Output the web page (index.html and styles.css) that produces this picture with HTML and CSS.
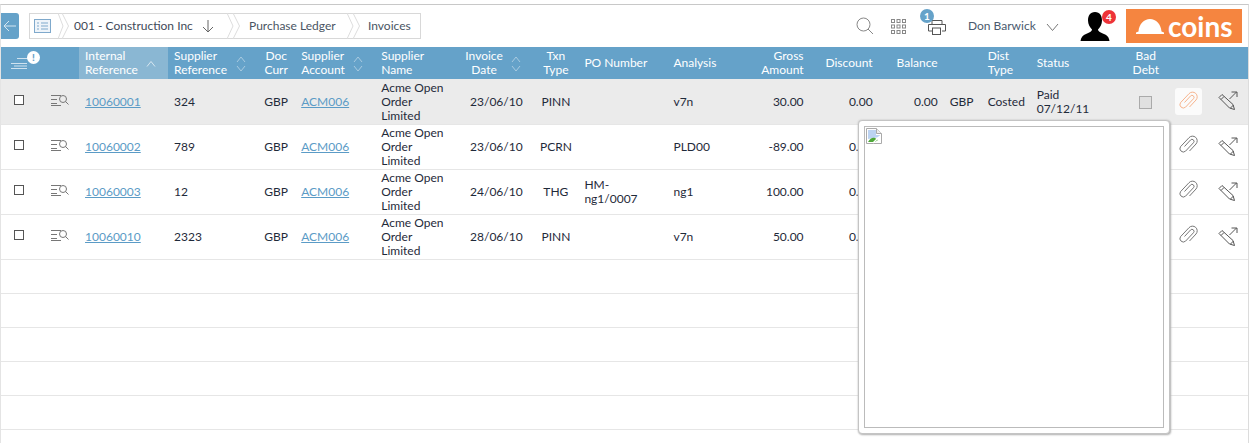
FILE: index.html
```html
<!DOCTYPE html>
<html lang="en">
<head>
<meta charset="utf-8">
<title>Invoices</title>
<link rel="stylesheet" href="styles.css">
</head>
<body>
<svg class="defs" width="0" height="0" aria-hidden="true">
  <symbol id="row-search" viewBox="0 0 18 12"><path d="M0 1.500h10M0 5.500h6M0 9.500h6M0 11.500h10" fill="none" stroke="#777" stroke-width="1"/><circle cx="12" cy="5" r="3.500" fill="none" stroke="#777"/><path d="M14.500 7.500l3 3" stroke="#777" fill="none"/></symbol>
  <symbol id="diamond" viewBox="0 0 10 16"><path d="M1 6l4-5 4 5M1 10l4 5 4-5" fill="none" stroke="#a9cbe1" stroke-width="1"/></symbol>
  <symbol id="clip" viewBox="0 0 20 20"><path d="M6.500 11.500l6-6.500a2 2 0 0 1 3 2.700l-8 8.500a3.400 3.400 0 0 1-5-4.500l8.500-9a4.700 4.700 0 0 1 7 6.300l-6.500 7" fill="none" stroke="currentColor" stroke-width="1"/></symbol>
  <symbol id="pencil" viewBox="0 0 20 20"><path d="M1 6.500l3-3 11 10 1.500 5-5-1.500zM3 8.500l3-3M12.500 17l3-3" fill="none" stroke="#555" stroke-width="1"/><path d="M11.500 8l7-7M13.500 1h5.500v5" fill="none" stroke="#555"/></symbol>
</svg>
<div class="frame">
  <header class="topbar">
    <button class="back" type="button" aria-label="Back"><svg width="14" height="12" viewBox="0 0 14 12"><path d="M13 6H1M6 1L1 6l5 5" fill="none" stroke="#d5e6f1" stroke-width="1"/></svg></button>
    <nav class="crumbs">
      <span class="crumb crumb-home"><svg width="17" height="14" viewBox="0 0 17 14"><rect x=".5" y=".5" width="16" height="13" fill="#eef4fa" stroke="#7fa9cc"/><path d="M3 4h2M7 4h7M3 7h2M7 7h7M3 10h2M7 10h7" stroke="#7fa9cc"/></svg></span>
      <svg class="chev" width="11" height="26" viewBox="0 0 11 26"><path d="M0 0l5 13-5 13M4 0l6.500 13L4 26" fill="none" stroke="#ddd"/></svg>
      <span class="crumb crumb-co">001 - Construction Inc<svg class="down" width="12" height="14" viewBox="0 0 12 14"><path d="M6 1v12M1 8l5 5 5-5" fill="none" stroke="#666"/></svg></span>
      <svg class="chev" width="13" height="26" viewBox="0 0 13 26"><path d="M0 0l6 13-6 13M6 0l6.500 13L6 26" fill="none" stroke="#ddd"/></svg>
      <span class="crumb crumb-pl">Purchase Ledger</span>
      <svg class="chev" width="13" height="26" viewBox="0 0 13 26"><path d="M0 0l6 13-6 13M6 0l6.500 13L6 26" fill="none" stroke="#ddd"/></svg>
      <span class="crumb crumb-inv">Invoices</span>
    </nav>
    <div class="tools">
      <svg class="t-search" width="18" height="18" viewBox="0 0 18 18"><circle cx="7.500" cy="7.500" r="6.500" fill="none" stroke="#888"/><path d="M12 12l5 5" stroke="#888"/></svg>
      <svg class="t-grid" width="15" height="15" viewBox="0 0 15 15"><g fill="none" stroke="#888"><rect x=".5" y=".5" width="3" height="3"/><rect x="6" y=".5" width="3" height="3"/><rect x="11.500" y=".5" width="3" height="3"/><rect x=".5" y="6" width="3" height="3"/><rect x="6" y="6" width="3" height="3"/><rect x="11.500" y="6" width="3" height="3"/><rect x=".5" y="11.500" width="3" height="3"/><rect x="6" y="11.500" width="3" height="3"/><rect x="11.500" y="11.500" width="3" height="3"/></g></svg>
      <span class="printer"><svg width="18" height="15" viewBox="0 0 18 15"><path d="M4 4V.5h10V4M4 11H.5V4.500h17V11H14" fill="none" stroke="#555"/><rect x="4.500" y="8" width="8" height="6.500" fill="#fff" stroke="#555"/></svg><span class="badge badge-blue">1</span></span>
      <span class="user-name">Don Barwick</span>
      <svg class="t-caret" width="13" height="8" viewBox="0 0 13 8"><path d="M1 1l5.500 6.500L12 1" fill="none" stroke="#777"/></svg>
      <span class="avatar"><svg width="30" height="29" viewBox="0 0 30 29"><path d="M15 0c5 0 7 4 7 8.500 0 4-2 7-4 9 0 2 3 3 6 4.500 3 1.300 5 3 5.500 7H.5c.5-4 2.500-5.700 5.500-7 3-1.500 6-2.500 6-4.500-2-2-4-5-4-9C8 4 10 0 15 0z" fill="#000"/></svg><span class="badge badge-red">4</span></span>
      <div class="logo"><svg width="28" height="15" viewBox="0 0 28 15"><path d="M0 15v-1.500l2.500-1C3 5 8 0 14 0s11 5 11.500 12.500l2.500 1V15z" fill="#fff"/></svg><span class="logo-text">coins</span></div>
    </div>
  </header>
  <table class="grid">
    <colgroup>
      <col class="c1"><col class="c2"><col class="c3"><col class="c4"><col class="c5"><col class="c6"><col class="c7"><col class="c8"><col class="c9"><col class="c10"><col class="c11"><col class="c12"><col class="c13"><col class="c14"><col class="c15"><col class="c16"><col class="c17"><col class="c18"><col class="c19"><col class="c20">
    </colgroup>
    <thead>
      <tr>
        <th colspan="2" class="menu-head"><svg width="18" height="13" viewBox="0 0 18 13"><path d="M6 1.500h12M0 6.500h16M0 11.500h16M3 9h13" stroke="#cfe2ef" fill="none"/></svg><span class="alert">!</span></th>
        <th class="sorted"><span class="sort-wrap">Internal<br>Reference<svg class="sort" width="10" height="6" viewBox="0 0 10 6"><path d="M1 5.500l4-5 4 5" fill="none" stroke="#d6e6f0"/></svg></span></th>
        <th><span class="sort-wrap">Supplier<br>Reference<svg class="sort sort-d" width="10" height="16"><use href="#diamond"/></svg></span></th>
        <th class="mid">Doc<br>Curr</th>
        <th><span class="sort-wrap">Supplier<br>Account<svg class="sort sort-d sort-acc" width="10" height="16"><use href="#diamond"/></svg></span></th>
        <th>Supplier<br>Name</th>
        <th class="mid date-h"><span class="sort-wrap">Invoice<br>Date<svg class="sort sort-d sort-date" width="10" height="16"><use href="#diamond"/></svg></span></th>
        <th class="mid">Txn<br>Type</th>
        <th>PO Number</th>
        <th>Analysis</th>
        <th class="num">Gross<br>Amount</th>
        <th class="num">Discount</th>
        <th class="num">Balance</th>
        <th></th>
        <th>Dist<br>Type</th>
        <th>Status</th>
        <th class="mid">Bad<br>Debt</th>
        <th></th>
        <th></th>
      </tr>
    </thead>
    <tbody>
      <tr class="selected">
        <td class="mid"><span class="check"></span></td>
        <td class="mid"><svg class="rowi" width="18" height="12"><use href="#row-search"/></svg></td>
        <td><a href="#">10060001</a></td>
        <td>324</td>
        <td class="mid">GBP</td>
        <td><a href="#">ACM006</a></td>
        <td>Acme Open Order Limited</td>
        <td class="mid">23/06/10</td>
        <td class="mid">PINN</td>
        <td></td>
        <td>v7n</td>
        <td class="num">30.00</td>
        <td class="num">0.00</td>
        <td class="num">0.00</td>
        <td>GBP</td>
        <td>Costed</td>
        <td>Paid<br>07/12/11</td>
        <td class="mid"><span class="check check-off"></span></td>
        <td class="mid icon"><span class="clip-on"><svg width="20" height="20"><use href="#clip"/></svg></span></td>
        <td class="mid icon"><svg class="pen" width="20" height="20"><use href="#pencil"/></svg></td>
      </tr>
      <tr>
        <td class="mid"><span class="check"></span></td>
        <td class="mid"><svg class="rowi" width="18" height="12"><use href="#row-search"/></svg></td>
        <td><a href="#">10060002</a></td>
        <td>789</td>
        <td class="mid">GBP</td>
        <td><a href="#">ACM006</a></td>
        <td>Acme Open Order Limited</td>
        <td class="mid">23/06/10</td>
        <td class="mid">PCRN</td>
        <td></td>
        <td>PLD00</td>
        <td class="num">-89.00</td>
        <td class="num">0.00</td>
        <td></td><td></td><td></td><td></td><td></td>
        <td class="mid icon clip-off"><svg width="20" height="20"><use href="#clip"/></svg></td>
        <td class="mid icon"><svg class="pen" width="20" height="20"><use href="#pencil"/></svg></td>
      </tr>
      <tr>
        <td class="mid"><span class="check"></span></td>
        <td class="mid"><svg class="rowi" width="18" height="12"><use href="#row-search"/></svg></td>
        <td><a href="#">10060003</a></td>
        <td>12</td>
        <td class="mid">GBP</td>
        <td><a href="#">ACM006</a></td>
        <td>Acme Open Order Limited</td>
        <td class="mid">24/06/10</td>
        <td class="mid">THG</td>
        <td>HM-<br>ng1/0007</td>
        <td>ng1</td>
        <td class="num">100.00</td>
        <td class="num">0.00</td>
        <td></td><td></td><td></td><td></td><td></td>
        <td class="mid icon clip-off"><svg width="20" height="20"><use href="#clip"/></svg></td>
        <td class="mid icon"><svg class="pen" width="20" height="20"><use href="#pencil"/></svg></td>
      </tr>
      <tr>
        <td class="mid"><span class="check"></span></td>
        <td class="mid"><svg class="rowi" width="18" height="12"><use href="#row-search"/></svg></td>
        <td><a href="#">10060010</a></td>
        <td>2323</td>
        <td class="mid">GBP</td>
        <td><a href="#">ACM006</a></td>
        <td>Acme Open Order Limited</td>
        <td class="mid">28/06/10</td>
        <td class="mid">PINN</td>
        <td></td>
        <td>v7n</td>
        <td class="num">50.00</td>
        <td class="num">0.00</td>
        <td></td><td></td><td></td><td></td><td></td>
        <td class="mid icon clip-off"><svg width="20" height="20"><use href="#clip"/></svg></td>
        <td class="mid icon"><svg class="pen" width="20" height="20"><use href="#pencil"/></svg></td>
      </tr>
      <tr class="empty"><td colspan="20"></td></tr>
      <tr class="empty"><td colspan="20"></td></tr>
      <tr class="empty"><td colspan="20"></td></tr>
      <tr class="empty"><td colspan="20"></td></tr>
      <tr class="empty"><td colspan="20"></td></tr>
    </tbody>
  </table>
  <aside class="popup">
    <div class="popup-inner">
      <svg width="16" height="16" viewBox="0 0 16 16"><path d="M.5.500h10l5 5v10H.5z" fill="#fff" stroke="#aaa"/><path d="M10.500.5v5h5" fill="#eee" stroke="#aaa"/><path d="M2 2h8v5h4v2L2 11z" fill="#bcd3f2"/><path d="M2 14c2-4 5-5 7-4l3 2-3 2z" fill="#4fa839"/><path d="M7 15l7-7" stroke="#fff" stroke-width="1.500"/></svg>
    </div>
  </aside>
</div>
</body>
</html>
```
FILE: styles.css
```css
* { box-sizing: border-box; }
html, body { margin: 0; padding: 0; background: #fff; }
body {
  font-family: Lato, "Open Sans", sans-serif;
  font-size: 12px;
  line-height: 14px;
  color: #1f2a3a;
  overflow: hidden;
}
.defs { position: absolute; }
.frame {
  position: relative;
  width: 1249px;
  height: 439px;
  margin-top: 4px;
  border-top: 1px solid #c8c8c8;
  border-right: 1px solid #dcdcdc;
  border-left: 1px solid #e4e4e4;
  overflow: hidden;
}

/* top bar */
.topbar { display: flex; align-items: flex-start; height: 42px; }
.back {
  width: 18px; height: 26px; margin: 8px 10px 0 0; padding: 0;
  border: 0; border-radius: 0 3px 3px 0; background: #65a2c9;
  display: flex; align-items: center; justify-content: center;
}
.crumbs {
  flex: none; display: flex; align-items: center; width: 392px; height: 26px; margin-top: 8px;
  border: 1px solid #d8d8d8; background: #fff; color: #4a5563; white-space: nowrap;
}
.chev { flex: none; margin: -1px 0; }
.crumb { display: flex; align-items: center; flex: none; }
.crumb-home { width: 28px; padding-left: 4px; }
.crumb-co { width: 158px; padding-left: 5px; color: #3f4a58; }
.down { margin-left: 9px; }
.crumb-pl { width: 107px; padding-left: 9px; }
.crumb-inv { padding-left: 8px; }
.tools { flex: 1; display: flex; align-items: flex-start; padding-right: 6px; }
.t-search { margin: 12px 0 0 435px; }
.t-grid { margin: 14px 0 0 17px; }
.printer { position: relative; margin: 15px 0 0 22px; }
.badge {
  position: absolute; width: 14px; height: 14px; border-radius: 50%;
  color: #fff; font-size: 10px; font-weight: 700; line-height: 14px; text-align: center;
}
.badge-blue { left: -8px; top: -11px; background: #65a2c9; }
.badge-red { right: -6px; top: -2px; background: #ee3338; }
.user-name { margin: 14px 0 0 22px; color: #4a5a6e; white-space: nowrap; }
.t-caret { margin: 18px 0 0 10px; }
.avatar { position: relative; margin: 7px 0 0 auto; height: 29px; }
.logo {
  display: flex; align-items: flex-end; gap: 4px; width: 116px; height: 34px;
  margin: 4px 0 0 16px; padding: 0 0 9px 10px; background: #f58540;
}
.logo-text { color: #fff; font: 700 28px/15px Lato, sans-serif; }

/* grid */
.grid { table-layout: fixed; border-collapse: collapse; width: 1247px; }
.c1 { width: 35px; } .c2 { width: 43px; } .c3 { width: 89px; } .c4 { width: 89px; }
.c5 { width: 38px; } .c6 { width: 80px; } .c7 { width: 84px; } .c8 { width: 74px; }
.c9 { width: 45px; } .c10 { width: 89px; } .c11 { width: 82px; } .c12 { width: 60px; }
.c13 { width: 69px; } .c14 { width: 65px; } .c15 { width: 38px; } .c16 { width: 49px; }
.c17 { width: 89px; } .c18 { width: 52px; } .c19 { width: 33px; } .c20 { width: 43px; }
th {
  height: 32px; padding: 0 6px; background: #65a2c9; color: #fff;
  font-weight: 400; text-align: left; white-space: nowrap; overflow: hidden;
}
th.sorted { background: #8ab7d3; }
th.mid, td.mid { text-align: center; }
th.num, td.num { text-align: right; }
th.menu-head { padding: 0 0 0 10px; position: relative; }
th.menu-head svg { display: block; }
.alert {
  position: absolute; left: 26px; top: 4px; width: 13px; height: 13px; border-radius: 50%;
  background: #fff; color: #65a2c9; font-size: 10px; font-weight: 900; line-height: 13px; text-align: center;
}
.sort-wrap { position: relative; display: inline-block; }
.sort { position: absolute; left: 61px; top: 12px; }
.sort-d { left: 62px; top: 7px; }
.sort-acc { left: 52px; }
.sort-date { left: 46px; top: 7px; }
th.date-h { padding-right: 32px; }
td { padding: 1px 6px 0; height: 45px; border-bottom: 1px solid #e6e6e6; vertical-align: middle; }
td.icon { padding: 0; }
tr.selected td { background: #ebebeb; }
tr.empty td { height: 34px; }
a { color: #5b9bc6; text-decoration: underline; }
.check { display: inline-block; width: 10px; height: 10px; border: 1px solid #555; background: #fff; vertical-align: middle; position: relative; top: -3px; }
.check-off { width: 13px; height: 13px; border-color: #aaa; background: #e0e0e0; top: 0; }
.rowi { vertical-align: middle; position: relative; top: -3px; left: 2px; }
.clip-on { display: inline-flex; align-items: center; justify-content: center; width: 27px; height: 27px; border-radius: 3px; background: #fbfbfb; color: #f7b48d; vertical-align: middle; }
.clip-off { color: #777; }
.pen { vertical-align: middle; margin-left: 4px; }

/* overlay preview */
.popup {
  position: absolute; left: 857px; top: 115px; width: 312px; height: 314px;
  padding: 5px; background: #fff; border: 1px solid #c4c4c4; border-radius: 4px;
  box-shadow: 1px 1px 2px #b4b4b4, 0 0 2px #bdbdbd;
}
.popup-inner { height: 302px; width: 300px; border: 1px solid #bbb; padding: 1px; }
.popup-inner svg { display: block; }
```
